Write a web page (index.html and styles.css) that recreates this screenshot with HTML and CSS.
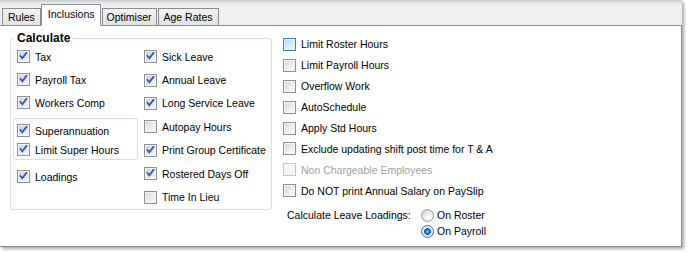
FILE: index.html
```html
<!DOCTYPE html>
<html>
<head>
<meta charset="utf-8">
<link rel="stylesheet" href="styles.css">
</head>
<body>
<div class="window">
  <div class="tabstrip">
    <div class="tab">Rules</div>
    <div class="tab active">Inclusions</div>
    <div class="tab">Optimiser</div>
    <div class="tab">Age Rates</div>
  </div>
  <div class="panel">
    <fieldset class="group">
      <legend>Calculate</legend>
      <div class="cols">
        <div class="col col1">
          <div class="row"><span class="cb on"></span>Tax</div>
          <div class="row"><span class="cb on"></span>Payroll Tax</div>
          <div class="row"><span class="cb on"></span>Workers Comp</div>
          <div class="subbox">
            <div class="row sm"><span class="cb on"></span>Superannuation</div>
            <div class="row sm"><span class="cb on"></span>Limit Super Hours</div>
          </div>
          <div class="row load"><span class="cb on"></span>Loadings</div>
        </div>
        <div class="col col2">
          <div class="row"><span class="cb on"></span>Sick Leave</div>
          <div class="row"><span class="cb on"></span>Annual Leave</div>
          <div class="row"><span class="cb on"></span>Long Service Leave</div>
          <div class="row"><span class="cb"></span>Autopay Hours</div>
          <div class="row"><span class="cb on"></span>Print Group Certificate</div>
          <div class="row"><span class="cb on"></span>Rostered Days Off</div>
          <div class="row"><span class="cb"></span>Time In Lieu</div>
        </div>
      </div>
    </fieldset>
    <div class="right">
      <div class="row r"><span class="cb hot"></span>Limit Roster Hours</div>
      <div class="row r"><span class="cb"></span>Limit Payroll Hours</div>
      <div class="row r"><span class="cb"></span>Overflow Work</div>
      <div class="row r"><span class="cb"></span>AutoSchedule</div>
      <div class="row r"><span class="cb"></span>Apply Std Hours</div>
      <div class="row r"><span class="cb"></span>Exclude updating shift post time for T &amp; A</div>
      <div class="row r disabled"><span class="cb dis"></span>Non Chargeable Employees</div>
      <div class="row r"><span class="cb"></span>Do NOT print Annual Salary on PaySlip</div>
      <div class="loadings">
        <div class="ll-label">Calculate Leave Loadings:</div>
        <div class="radios">
          <div class="rrow"><span class="rb"></span>On Roster</div>
          <div class="rrow"><span class="rb sel"></span>On Payroll</div>
        </div>
      </div>
    </div>
  </div>
</div>
</body>
</html>
```
FILE: styles.css
```css
html, body {
  margin: 0;
  padding: 0;
  background: #ffffff;
}
body {
  font-family: "Liberation Sans", Arial, sans-serif;
  font-size: 10.5px;
  color: #000;
  width: 688px;
  height: 253px;
  overflow: hidden;
}
.window {
  width: 682px;
  height: 247px;
  display: flex;
  flex-direction: column;
  background: linear-gradient(#c9c9c9 0px, #e6e6e6 3px, #f0f0f0 5px, #f0f0f0 100%);
  box-shadow: 2px 2px 3px rgba(0,0,0,0.35);
}
.tabstrip {
  height: 25px;
  display: flex;
  align-items: flex-end;
  padding-left: 2px;
  position: relative;
  z-index: 2;
}
.tab {
  height: 16px;
  line-height: 16px;
  padding: 0 4px;
  border: 1px solid #898c95;
  border-bottom: none;
  margin-right: 1px;
  background: linear-gradient(#f2f2f2, #e3e3e3);
  font-size: 10.5px;
  box-sizing: content-box;
}
.tab:first-child { padding: 0 5px 0 5px; }
.tab:last-child { padding: 0 5px 0 5px; }
.tab.active {
  height: 20px;
  line-height: 18px;
  background: #fff;
  margin: 0 1px -1px -1px;
  padding: 0 5px 0 6px;
  border-bottom: 1px solid #fff;
}
.panel {
  flex: 1;
  background: #fff;
  border: 1px solid #898c95;
  margin-left: -1px;
  display: flex;
  align-items: flex-start;
}
.group {
  margin: 5px 0 0 10px;
  padding: 0 0 0 4px;
  width: 262px;
  box-sizing: border-box;
  border: 1px solid #d5dfe5;
  border-radius: 3px;
  min-width: 0;
}
.group legend {
  font-weight: bold;
  font-size: 12px;
  line-height: 14px;
  padding: 0 2px;
}
.cols {
  display: flex;
  height: 164px;
  padding-left: 2px;
}
.col1 { width: 127px; }
.col2 { width: 125px; }
.row {
  display: flex;
  align-items: center;
  height: 23px;
  white-space: nowrap;
}
.col2 .row { height: 23.4px; }
.row.sm { height: 19px; }
.cb {
  width: 13px;
  height: 13px;
  box-sizing: border-box;
  border: 1px solid #8e8f8f;
  background: linear-gradient(135deg, #d4d6d9 0%, #eeeff0 60%, #fbfbfb 100%);
  box-shadow: inset 0 0 0 1px #f6f6f6;
  margin-right: 5px;
  flex: none;
}
.cb.on {
  background:
    url("data:image/svg+xml;utf8,<svg xmlns='http://www.w3.org/2000/svg' width='11' height='11' viewBox='0 0 11 11'><path d='M2.5 5 L4.3 7.3 L8.5 1.8' fill='none' stroke='%233358b0' stroke-width='1.8' stroke-linecap='square'/></svg>") center/11px 11px no-repeat,
    linear-gradient(135deg, #c9cfd9 0%, #e6eaf0 60%, #f6f7f9 100%);
}
.cb.hot {
  border-color: #3c7fb1;
  background: linear-gradient(135deg, #aed8f6 0%, #d9eefb 60%, #eef8fe 100%);
  box-shadow: inset 0 0 0 1px #e6f4fd;
}
.cb.dis {
  border-color: #c4c4c4;
  background: #f4f4f4;
  box-shadow: none;
}
.disabled { color: #a0a0a0; }
.subbox {
  margin: 4px 0 0 -4px;
  padding: 2px 0 0 3px;
  width: 120px;
  height: 38px;
  box-sizing: content-box;
  border: 1px solid #d5dfe5;
  border-radius: 3px;
}
.row.load { margin-top: 5px; }
.right {
  margin: 8px 0 0 11px;
  display: flex;
  flex-direction: column;
}
.row.r { height: 20.9px; }
.loadings {
  display: flex;
  margin-top: 6px;
  padding-left: 4px;
}
.ll-label {
  width: 134px;
  height: 16px;
  line-height: 16px;
}
.rrow {
  display: flex;
  align-items: center;
  height: 16px;
}
.rb {
  width: 13px;
  height: 13px;
  box-sizing: border-box;
  border-radius: 50%;
  border: 1px solid #9a9a9a;
  background: radial-gradient(circle at 65% 70%, #ffffff 0%, #e9e9e9 50%, #cfcfcf 100%);
  margin-right: 3px;
  flex: none;
}
.rb.sel {
  border-color: #3c6f9e;
  background: radial-gradient(circle at 50% 50%, #6fc3f5 0%, #1f78c8 28%, #0d4d91 40%, #e6eef6 48%, #dde6ef 100%);
}
```
